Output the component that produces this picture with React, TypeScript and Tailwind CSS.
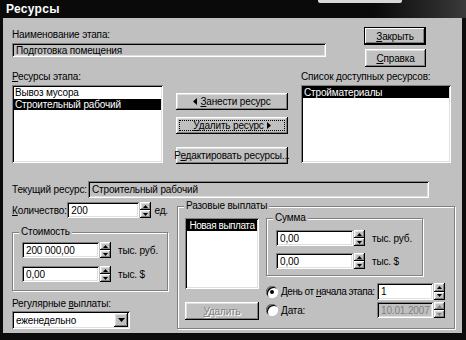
import React from 'react'

const raised =
  'bg-[#c0c0c0] shadow-[inset_-1px_-1px_0_#000,inset_1px_1px_0_#fff,inset_-2px_-2px_0_#808080,inset_2px_2px_0_#dfdfdf]'
const sunken =
  'shadow-[inset_1px_1px_0_#808080,inset_-1px_-1px_0_#fff,inset_2px_2px_0_#000,inset_-2px_-2px_0_#dfdfdf]'

function Field({ value, className, disabled, grey }: { value: string; className: string; disabled?: boolean; grey?: boolean }) {
  const bg = disabled ? 'bg-[#c0c0c0] text-[#808080]' : grey ? 'bg-[#c0c0c0] text-black' : 'bg-white text-black'
  return (
    <div className={`${className} ${sunken} ${bg} flex items-center pl-[4px] overflow-hidden whitespace-nowrap`}>
      {value}
    </div>
  )
}

function Arrow({ dir, disabled }: { dir: 'up' | 'down'; disabled?: boolean }) {
  return (
    <svg width="5" height="3" viewBox="0 0 5 3" className="block">
      <path d={dir === 'up' ? 'M2.5 0 L5 3 L0 3 Z' : 'M0 0 L5 0 L2.5 3 Z'} fill={disabled ? '#808080' : '#000'} />
    </svg>
  )
}

function Spinner({ h, disabled }: { h: string; disabled?: boolean }) {
  return (
    <div className={`w-[11px] ${h} flex flex-col`}>
      <div className={`flex-1 ${raised} flex items-center justify-center`}>
        <Arrow dir="up" disabled={disabled} />
      </div>
      <div className={`flex-1 ${raised} flex items-center justify-center`}>
        <Arrow dir="down" disabled={disabled} />
      </div>
    </div>
  )
}

function Group({ label, className, children }: { label: string; className: string; children: React.ReactNode }) {
  return (
    <div className={`relative border border-[#808080] shadow-[1px_1px_0_#fff,inset_1px_1px_0_#fff] ${className}`}>
      <span className="absolute -top-[8px] left-[6px] bg-[#c0c0c0] px-[2px] leading-[14px]">{label}</span>
      {children}
    </div>
  )
}

function Radio({ checked }: { checked?: boolean }) {
  return (
    <div className="w-[12px] h-[12px] shrink-0 rounded-full bg-white shadow-[inset_1px_1px_0_#808080,inset_-1px_-1px_0_#fff,inset_2px_2px_0_#000] flex items-center justify-center">
      {checked && <div className="w-[4px] h-[4px] rounded-full bg-black" />}
    </div>
  )
}

function MoneyRow({ value, unit }: { value: string; unit: string }) {
  return (
    <div className="flex items-center">
      <Field value={value} className="w-[77px] h-[16px]" />
      <div className="ml-[1px]">
        <Spinner h="h-[16px]" />
      </div>
      <span className="ml-[7px]">{unit}</span>
    </div>
  )
}

export default function App() {
  return (
    <div
      className="w-[466px] h-[340px] bg-[#0c0c0c] flex flex-col text-[10px] leading-[13px] tracking-[-0.15px] text-black overflow-hidden whitespace-nowrap"
      style={{ fontFamily: '"Liberation Sans", Arial, sans-serif' }}
    >
      {/* Title */}
      <div className="relative h-[18px] shrink-0 flex items-center pl-[6px] bg-gradient-to-r from-[#0a0a0a] from-80% to-[#3a3a3a]">
        <span className="text-white font-bold text-[12px] tracking-[0.3px]">Ресурсы</span>
        <div className="absolute top-0 left-[318px] w-[84px] h-[3px] bg-[#d8d8d8] rounded-b-[2px]" />
      </div>

      {/* Body */}
      <div className="flex-1 ml-[3px] mr-[4px] mb-[7px] bg-[#c0c0c0] pl-[9px] pt-[9px] flex flex-col">
        {/* Row 1 */}
        <div className="flex items-start">
          <div className="w-[314px] flex flex-col pt-[1px]">
            <span>Наименование этапа:</span>
            <Field value="Подготовка помещения" className="mt-[2px] h-[14px]" grey />
          </div>
          <div className="ml-[38px] flex flex-col gap-[4px]">
            <button className="w-[62px] h-[18px] border border-black bg-[#c0c0c0] shadow-[inset_-1px_-1px_0_#000,inset_1px_1px_0_#fff,inset_-2px_-2px_0_#808080] flex items-center justify-center">
              <span>
                <u>З</u>акрыть
              </span>
            </button>
            <button className={`w-[61px] h-[18px] ml-[1px] ${raised} flex items-center justify-center`}>
              <span>
                <u>С</u>правка
              </span>
            </button>
          </div>
        </div>

        {/* Row 2 */}
        <div className="flex items-start mt-[3px]">
          <div className="w-[151px] flex flex-col">
            <span>
              <u>Р</u>есурсы этапа:
            </span>
            <div className={`mt-[2px] h-[78px] bg-white ${sunken} p-[2px] flex flex-col`}>
              <div className="px-[1px] h-[12px] leading-[12px]">Вывоз мусора</div>
              <div className="px-[1px] h-[11px] leading-[11px] bg-black text-white">Строительный рабочий</div>
            </div>
          </div>
          <div className="ml-[13px] w-[112px] flex flex-col">
            <button className={`mt-[23px] h-[17px] ${raised} flex items-center justify-center gap-[3px]`}>
              <svg width="4" height="7" viewBox="0 0 4 7">
                <path d="M4 0 L0 3.5 L4 7 Z" fill="#000" />
              </svg>
              <span>
                <u>З</u>анести ресурс
              </span>
            </button>
            <button className={`mt-[7px] h-[17px] ${raised} flex items-center justify-center gap-[3px] relative`}>
              <span className="absolute inset-[3px] border border-dotted border-black" />
              <span>
                <u>У</u>далить ресурс
              </span>
              <svg width="4" height="7" viewBox="0 0 4 7">
                <path d="M0 0 L4 3.5 L0 7 Z" fill="#000" />
              </svg>
            </button>
            <button className={`mt-[13px] h-[17px] ${raised} flex items-center justify-center`}>
              <span>
                Р<u>е</u>дактировать ресурсы...
              </span>
            </button>
          </div>
          <div className="ml-[13px] w-[150px] flex flex-col">
            <span>Список доступных ресурсов:</span>
            <div className={`mt-[2px] h-[78px] bg-white ${sunken} p-[2px]`}>
              <div className="px-[1px] h-[11px] leading-[11px] bg-black text-white">Стройматериалы</div>
            </div>
          </div>
        </div>

        {/* Row 3 */}
        <div className="flex items-center mt-[17px]">
          <span className="w-[76px]">Текущий ресурс:</span>
          <Field value="Строительный рабочий" className="w-[341px] h-[17px]" grey />
        </div>

        {/* Row 4 */}
        <div className="flex items-start mt-[4px]">
          <div className="w-[156px] flex flex-col">
            <div className="flex items-center h-[16px]">
              <span className="w-[56px]">
                <u>К</u>оличество:
              </span>
              <Field value="200" className="w-[73px] h-[16px]" />
              <div className="ml-[1px]">
                <Spinner h="h-[16px]" />
              </div>
              <span className="ml-[3px]">ед.</span>
            </div>
            <Group label="Стоимость" className="mt-[14px] h-[59px] pl-[9px] pt-[9px] flex flex-col gap-[8px]">
              <MoneyRow value="200 000,00" unit="тыс. руб." />
              <MoneyRow value="0,00" unit="тыс. $" />
            </Group>
            <span className="mt-[6px]">
              Регулярные <u>в</u>ыплаты:
            </span>
            <div className={`mt-[1px] w-[118px] h-[18px] bg-white ${sunken} flex items-center pl-[4px] pr-[2px]`}>
              <span className="flex-1">еженедельно</span>
              <div className={`w-[14px] h-[14px] ${raised} flex items-center justify-center`}>
                <svg width="7" height="4" viewBox="0 0 7 4">
                  <path d="M0 0 L7 0 L3.5 4 Z" fill="#000" />
                </svg>
              </div>
            </div>
          </div>

          <Group label="Разовые выплаты" className="ml-[9px] mt-[4px] w-[278px] h-[123px] flex pl-[7px] pt-[11px]">
            <div className="w-[74px] flex flex-col">
              <div className={`h-[71px] bg-white ${sunken} p-[2px]`}>
                <div className="h-[11px] leading-[11px] bg-black text-white text-center tracking-[-0.45px]">
                  Новая выплата
                </div>
              </div>
              <button
                className={`mt-[13px] h-[18px] ${raised} flex items-center justify-center text-[#808080] [text-shadow:1px_1px_0_#fff]`}
              >
                <span>
                  <u>У</u>далить
                </span>
              </button>
            </div>
            <div className="ml-[7px] flex flex-col">
              <Group label="Сумма" className="w-[157px] h-[58px] pl-[9px] pt-[11px] flex flex-col gap-[7px]">
                <MoneyRow value="0,00" unit="тыс. руб." />
                <MoneyRow value="0,00" unit="тыс. $" />
              </Group>
              <div className="mt-[7px] flex items-center h-[17px]">
                <Radio checked />
                <span className="ml-[3px] w-[96px] tracking-[-0.45px]">
                  День от <u>н</u>ачала этапа:
                </span>
                <Field value="1" className="w-[56px] h-[17px]" />
                <div className="ml-[1px]">
                  <Spinner h="h-[17px]" />
                </div>
              </div>
              <div className="mt-[2px] flex items-center h-[16px]">
                <Radio />
                <span className="ml-[3px] w-[96px]">
                  <u>Д</u>ата:
                </span>
                <Field value="10.01.2007" className="w-[56px] h-[16px]" disabled />
                <div className="ml-[1px]">
                  <Spinner h="h-[16px]" disabled />
                </div>
              </div>
            </div>
          </Group>
        </div>
      </div>
    </div>
  )
}
